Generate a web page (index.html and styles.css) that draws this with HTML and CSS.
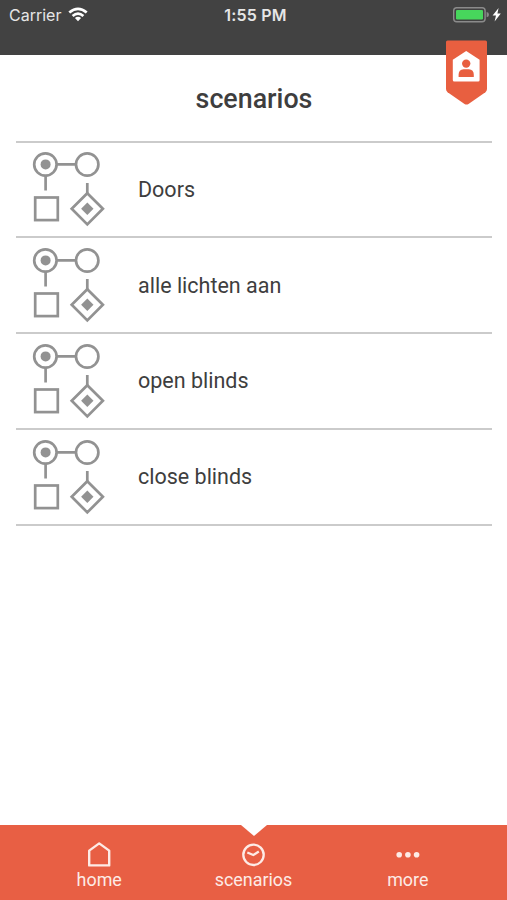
FILE: index.html
```html
<!DOCTYPE html>
<html lang="en">
<head>
    <meta charset="UTF-8">
    <meta name="viewport" content="width=device-width, initial-scale=1.0">
    <title>scenarios</title>
    <link rel="stylesheet" href="styles.css">
</head>
<body>
    <!-- shared icon for every scenario row -->
    <svg class="sprite" width="0" height="0">
        <symbol id="scenario" viewBox="0 0 78 80">
            <g fill="none" stroke="#929292" stroke-width="2.7">
                <circle cx="17.4" cy="16.5" r="11.2"/>
                <circle cx="59.2" cy="16.5" r="11.2"/>
                <path d="M28.6 16.3H48M17.6 27.7V42.5M59.3 35V45"/>
                <rect x="7.2" y="49.5" width="22.6" height="22.6"/>
                <path d="M59.3 45.2L74.9 60.8L59.3 76.4L43.7 60.8Z"/>
            </g>
            <circle cx="17.6" cy="16.4" r="5" fill="#929292"/>
            <path d="M59.3 54.6L65.5 60.8L59.3 67L53.1 60.8Z" fill="#929292"/>
        </symbol>
    </svg>

    <header class="status-bar">
        <div class="carrier">
            <span>Carrier</span>
            <svg width="20" height="15" viewBox="0 0 20 15">
                <g fill="none" stroke="#fff" stroke-width="2.7">
                    <path d="M1.3 5.6Q10 -2 18.7 5.6"/>
                    <path d="M4.6 9Q10 4.2 15.4 9"/>
                </g>
                <path d="M6.9 11.1Q10 8.6 13.1 11.1L10 14.3Z" fill="#fff"/>
            </svg>
        </div>
        <div class="time">1:55 PM</div>
        <div class="battery">
            <svg width="50" height="18" viewBox="0 0 50 18">
                <rect x="1.7" y="2.7" width="31.4" height="14" rx="3" fill="none" stroke="#8b8b8b" stroke-width="1.4"/>
                <rect x="4" y="4.9" width="27" height="9.6" rx="1.2" fill="#47d65c"/>
                <path d="M34.6 7.1Q37 7.5 37 9.7Q37 11.9 34.6 12.3Z" fill="#8b8b8b"/>
                <path d="M46.6 3L40.6 10.5H44L42.6 16.4L48.8 8.4H45.4Z" fill="#fff"/>
            </svg>
        </div>
    </header>

    <svg class="user-badge" width="43" height="66" viewBox="0 0 43 66">
        <path d="M2.5 .5H40.5Q42 .5 42 2V49Q42 51 40.4 52.2L23.5 63.9Q21.5 65.2 19.5 63.9L2.6 52.2Q1 51 1 49V2Q1 .5 2.5 .5Z" fill="#e85f40"/>
        <path d="M21.2 11L34.6 19.8V40Q34.6 41.5 33.1 41.5H9.3Q7.8 41.5 7.8 40V19.8Z" fill="#fff"/>
        <circle cx="21.2" cy="23.6" r="4.2" fill="#e85f40"/>
        <path d="M13.6 37V34.8Q13.6 29.4 18.6 29.2H23.8Q28.8 29.4 28.8 34.8V37Z" fill="#e85f40"/>
    </svg>

    <main class="content">
        <h1 class="title">scenarios</h1>
        <ul class="scenario-list">
            <li class="scenario">
                <svg width="78" height="80"><use href="#scenario"/></svg>
                <span>Doors</span>
            </li>
            <li class="scenario">
                <svg width="78" height="80"><use href="#scenario"/></svg>
                <span>alle lichten aan</span>
            </li>
            <li class="scenario">
                <svg width="78" height="80"><use href="#scenario"/></svg>
                <span>open blinds</span>
            </li>
            <li class="scenario">
                <svg width="78" height="80"><use href="#scenario"/></svg>
                <span>close blinds</span>
            </li>
        </ul>
    </main>

    <nav class="tab-bar">
        <a class="tab">
            <svg width="28" height="28" viewBox="0 0 28 28">
                <path d="M4.2 9.6L14.2 2.4L24.2 9.6V24.4H4.2Z" fill="none" stroke="#fdebe6" stroke-width="2.4" stroke-linejoin="round"/>
            </svg>
            <span>home</span>
        </a>
        <a class="tab active">
            <svg width="28" height="28" viewBox="0 0 28 28">
                <g fill="none" stroke="#fdebe6" stroke-width="2.3">
                    <circle cx="14.5" cy="13.8" r="10.2"/>
                    <path d="M8.3 11.5L14.3 14L19.8 10.6"/>
                </g>
            </svg>
            <span>scenarios</span>
        </a>
        <a class="tab">
            <svg width="28" height="28" viewBox="0 0 28 28">
                <g fill="#fdebe6">
                    <circle cx="5.2" cy="13.8" r="2.8"/>
                    <circle cx="13.9" cy="13.8" r="2.8"/>
                    <circle cx="22.6" cy="13.8" r="2.8"/>
                </g>
            </svg>
            <span>more</span>
        </a>
    </nav>
</body>
</html>
```
FILE: styles.css
```css
* {
    box-sizing: border-box;
}
body {
    margin: 0;
    height: 100vh;
    display: flex;
    flex-direction: column;
    position: relative;
    background-color: #fff;
    color: #3e3e3e;
    font-family: Roboto, sans-serif;
    overflow: hidden;
}
svg {
    display: block;
    flex-shrink: 0;
}
.sprite {
    position: absolute;
}

/* status bar */
.status-bar {
    display: grid;
    grid-template-columns: 1fr auto 1fr;
    align-items: start;
    height: 54.5px;
    flex-shrink: 0;
    padding: 5px 5px 0 9px;
    background-color: #424242;
    color: #e6e6e6;
    font-family: Inter, sans-serif;
    font-size: 16px;
    line-height: 20px;
}
.carrier {
    display: flex;
    gap: 7px;
}
.carrier svg {
    margin-top: 2px;
}
.time {
    font-weight: 600;
    letter-spacing: 0.2px;
}
.battery {
    justify-self: end;
}

.user-badge {
    position: absolute;
    top: 40px;
    right: 19.5px;
}

/* list */
.content {
    flex: 1;
    padding: 0 15px 0 16px;
}
.title {
    margin: 0;
    height: 86px;
    padding-top: 28px;
    font-size: 26.8px;
    line-height: 32px;
    font-weight: 500;
    text-align: center;
}
.scenario-list {
    margin: 0;
    padding: 0;
    list-style: none;
    border-top: 2px solid #cbcbcb;
}
.scenario {
    display: flex;
    align-items: center;
    gap: 32px;
    height: 95.75px;
    padding-left: 12px;
    border-bottom: 2px solid #cbcbcb;
    font-size: 21.5px;
}
.scenario svg {
    margin-bottom: 2px;
}

/* bottom tabs */
.tab-bar {
    display: flex;
    justify-content: center;
    height: 75.5px;
    flex-shrink: 0;
    background-color: #e85f44;
    color: #fdebe6;
    font-size: 17.9px;
    line-height: 22px;
}
.tab {
    position: relative;
    display: flex;
    flex-direction: column;
    align-items: center;
    width: 154.3px;
    padding-top: 16px;
}
.tab.active::before {
    content: "";
    position: absolute;
    top: 0;
    left: 50%;
    margin-left: -12.5px;
    border: 13px solid transparent;
    border-top: 11px solid #fff;
    border-bottom: 0;
}
```
